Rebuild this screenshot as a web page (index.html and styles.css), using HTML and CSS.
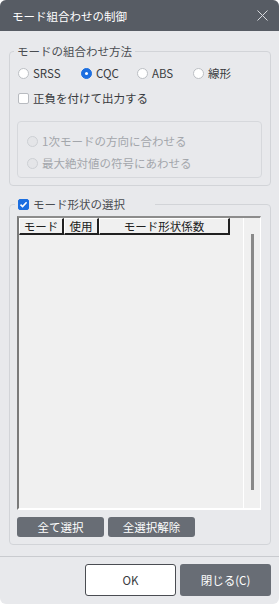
FILE: index.html
```html
<!DOCTYPE html>
<html lang="ja">
<head>
<meta charset="utf-8">
<link rel="stylesheet" href="styles.css">
</head>
<body>
<div class="dialog">
  <div class="titlebar">
    <span class="title">モード組合わせの制御</span>
    <svg class="close" width="11" height="11" viewBox="0 0 11 11"><path d="M0.5 0.5 L10.5 10.5 M10.5 0.5 L0.5 10.5" stroke="#d8dade" stroke-width="1" fill="none"/></svg>
  </div>
  <div class="content">
    <fieldset class="group g1">
      <legend class="legend">モードの組合わせ方法</legend>
      <div class="radios">
        <label class="opt"><span class="radio"></span>SRSS</label>
        <label class="opt"><span class="radio on"></span>CQC</label>
        <label class="opt"><span class="radio"></span>ABS</label>
        <label class="opt"><span class="radio"></span>線形</label>
      </div>
      <label class="opt chk-row"><span class="check"></span>正負を付けて出力する</label>
      <fieldset class="inner">
        <label class="opt dis"><span class="radio off"></span>1次モードの方向に合わせる</label>
        <label class="opt dis"><span class="radio off"></span>最大絶対値の符号にあわせる</label>
      </fieldset>
    </fieldset>
    <fieldset class="group g2">
      <legend class="legend legend2"><span class="check checked"><svg width="9" height="9" viewBox="0 0 9 9"><path d="M1.5 4.6 L3.6 6.6 L7.6 2.2" stroke="#fff" stroke-width="1.6" fill="none"/></svg></span>モード形状の選択</legend>
      <div class="grid">
        <div class="grid-main">
          <div class="head">
            <div class="hc c1">モード</div>
            <div class="hc c2">使用</div>
            <div class="hc c3">モード形状係数</div>
          </div>
        </div>
        <div class="grid-scroll"><div class="thumb"></div></div>
      </div>
      <div class="sel-btns">
        <button class="btn dark small">全て選択</button>
        <button class="btn dark small">全選択解除</button>
      </div>
    </fieldset>
  </div>
  <div class="footer">
    <button class="btn light big">OK</button>
    <button class="btn dark big">閉じる(C)</button>
  </div>
</div>
</body>
</html>
```
FILE: styles.css
```css
html, body {
  margin: 0;
  padding: 0;
  background: #ffffff;
}
body {
  width: 279px;
  height: 604px;
  font-family: "Noto Sans CJK JP", "Noto Sans", sans-serif;
  font-size: 11.5px;
  color: #3a3c40;
}
.dialog {
  width: 279px;
  height: 604px;
  background: #e8e9ec;
  border-radius: 6px;
  overflow: hidden;
  display: flex;
  flex-direction: column;
}
.titlebar {
  height: 31px;
  background: #575c64;
  display: flex;
  align-items: center;
  justify-content: space-between;
  padding: 0 12px 0 12px;
  flex-shrink: 0;
}
.title {
  color: #ffffff;
  font-size: 11.5px;
  line-height: 16px;
}
.close {
  display: block;
  margin-right: -1px;
}
.content {
  padding: 0 8px 0 9px;
  flex: 1;
}
.group {
  margin: 0;
  border: 1px solid #d2d4d8;
  border-radius: 4px;
  min-width: 0;
}
.g1 {
  margin-top: 12px;
  padding: 6px 8px 7px 7px;
}
.legend {
  margin-left: -3px;
  padding: 0 3px;
  line-height: 16px;
  color: #4a4d52;
}
.radios {
  display: grid;
  grid-template-columns: 63px 56px 56px auto;
  padding-left: 1px;
}
.opt {
  display: flex;
  align-items: center;
  gap: 4px;
  height: 16px;
  line-height: 16px;
  white-space: nowrap;
}
.radio {
  width: 9px;
  height: 9px;
  border: 1px solid #bcbfc4;
  border-radius: 50%;
  background: #ffffff;
  flex-shrink: 0;
  position: relative;
}
.radio.on {
  background: #1b6ee0;
  border-color: #1b6ee0;
}
.radio.on::after {
  content: "";
  position: absolute;
  left: 3px;
  top: 3px;
  width: 3px;
  height: 3px;
  border-radius: 50%;
  background: #ffffff;
}
.radio.off {
  background: #e4e5e8;
  border-color: #cdd0d4;
}
.chk-row {
  margin-top: 9px;
  padding-left: 1px;
}
.check {
  width: 9px;
  height: 9px;
  border: 1px solid #b8bbc0;
  border-radius: 2px;
  background: #ffffff;
  flex-shrink: 0;
  display: flex;
  align-items: center;
  justify-content: center;
}
.check.checked {
  background: #1b6ee0;
  border-color: #1b6ee0;
}
.check svg {
  display: block;
}
.inner {
  margin: 15px 0 0 0;
  padding: 11px 8px 6px 9px;
  border: 1px solid #d6d8dc;
  border-radius: 4px;
  display: flex;
  flex-direction: column;
  gap: 6px;
  min-width: 0;
}
.dis {
  color: #a3a6ab;
}
.g2 {
  margin-top: 10px;
  padding: 4px 9px 7px 7px;
}
.legend2 {
  display: flex;
  align-items: center;
  gap: 4px;
  width: 137px;
  margin-left: -2px;
  padding: 0 0 0 3px;
}
.grid {
  height: 290px;
  background: #f0f0f0;
  border-style: solid;
  border-width: 2px 1px 2px 2px;
  border-color: #8c8c8c #ffffff #ffffff #7a7a7a;
  display: flex;
  align-items: stretch;
}
.grid-main {
  flex: 1;
}
.head {
  display: flex;
  height: 16px;
}
.hc {
  box-sizing: border-box;
  height: 17px;
  background: #f0f0f0;
  border-style: solid;
  border-width: 1px 2px 2px 1px;
  border-color: #ffffff #202020 #202020 #ffffff;
  color: #202020;
  font-size: 11.5px;
  line-height: 14px;
  text-align: center;
}
.c1 { width: 45px; }
.c2 { width: 35px; }
.c3 { width: 131px; }
.grid-scroll {
  width: 16px;
  border-left: 1px solid #ffffff;
  display: flex;
  justify-content: center;
  align-items: flex-start;
  padding-top: 16px;
}
.thumb {
  width: 3px;
  height: 256px;
  background: #8a8a8a;
}
.sel-btns {
  display: flex;
  gap: 4px;
  margin-top: 7px;
}
.btn {
  font-family: "Noto Sans CJK JP", "Noto Sans", sans-serif;
  border-radius: 3px;
  padding: 0;
  margin: 0;
  cursor: pointer;
}
.dark {
  background: #686d75;
  color: #ffffff;
  border: none;
}
.small {
  width: 87px;
  height: 20px;
  font-size: 11.5px;
  line-height: 20px;
}
.footer {
  border-top: 1px solid #c9cbcf;
  margin-top: 9px;
  padding: 7px 8px 8px 0;
  display: flex;
  justify-content: flex-end;
  gap: 4px;
  flex-shrink: 0;
}
.big {
  width: 91px;
  height: 32px;
  font-size: 11.5px;
}
.light {
  background: #ffffff;
  border: 1px solid #4a4d52;
  color: #3a3c40;
}
```
